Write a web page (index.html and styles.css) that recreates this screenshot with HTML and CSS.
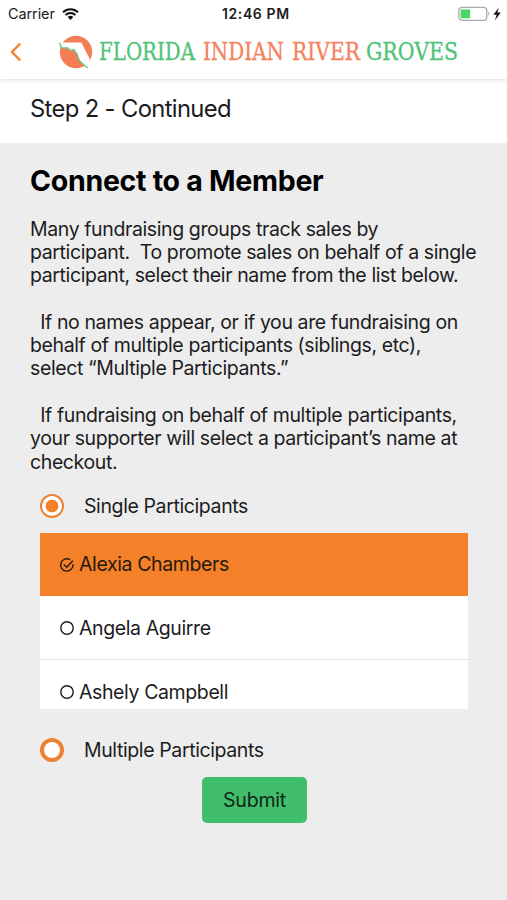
FILE: index.html
```html
<!DOCTYPE html>
<html lang="en">
<head>
<meta charset="utf-8">
<title>Connect to a Member</title>
<link rel="stylesheet" href="styles.css">
</head>
<body>
<header class="top">
  <div class="status">
    <span class="carrier">Carrier</span>
    <svg class="wifi" viewBox="0 0 17 12"><path d="M1 4.3a10.7 10.7 0 0 1 15 0M3.6 7a7 7 0 0 1 9.8 0" fill="none" stroke="#111" stroke-width="2.1"/><path d="M5.7 9.1a4 4 0 0 1 5.6 0L8.5 12z" fill="#111"/></svg>
    <span class="time">12:46 PM</span>
    <svg class="battery" viewBox="0 0 46 16"><rect x=".8" y="1.3" width="28" height="13" rx="3.3" fill="#fff" stroke="#aaa" stroke-width="1.3"/><rect x="2.6" y="3.4" width="9.6" height="8.8" rx=".8" fill="#4bd763"/><path d="M30.3 5.5q2.4 2.100 0 4.600z" fill="#aaa"/><path d="M40.8 1.600l-5.400 7.100h3.300l-1.900 5.700 6-7.800h-3.500z" fill="#111"/></svg>
  </div>
  <div class="nav">
    <svg class="back" viewBox="0 0 12 20"><path d="M10.2 1.5L2 10l8.2 8.5" fill="none" stroke="#f48029" stroke-width="2.4"/></svg>
    <div class="brand">
      <svg class="logo" viewBox="0 0 34 38">
        <circle cx="17" cy="19" r="16.2" fill="#f37e55"/>
        <path d="M.5 9.500L22.500 9.500 26.300 17.500 30.800 26 29.500 34.700 27.500 34.300 20.500 28 17.500 20.500 14.500 17 11.500 17.800 8.500 15.300 2.600 15z" fill="#fff"/>
        <path d="M.4 9.800l2.300 5 6 .1 3 2.500 3-.8 3.200 4 2.600 7.200 7.300 6.600 1.400.3" fill="none" stroke="#6cc58a" stroke-width="1.300"/>
      </svg>
      <svg class="words" viewBox="0 0 362 26">
        <text x="0" y="21" textLength="96" lengthAdjust="spacingAndGlyphs" class="green">FLORIDA</text>
        <text x="104" y="21" textLength="81" lengthAdjust="spacingAndGlyphs" class="coral">INDIAN</text>
        <text x="193" y="21" textLength="68" lengthAdjust="spacingAndGlyphs" class="coral">RIVER</text>
        <text x="267" y="21" textLength="92" lengthAdjust="spacingAndGlyphs" class="green">GROVES</text>
      </svg>
    </div>
  </div>
</header>
<div class="step">Step 2 - Continued</div>
<main>
  <h1>Connect to a Member</h1>
  <p class="copy">Many fundraising groups track sales by
participant.  To promote sales on behalf of a single
participant, select their name from the list below.

  If no names appear, or if you are fundraising on
behalf of multiple participants (siblings, etc),
select “Multiple Participants.”

  If fundraising on behalf of multiple participants,
your supporter will select a participant’s name at
checkout.</p>
  <div class="choice single"><span class="radio on"></span><span class="label">Single Participants</span></div>
  <div class="list">
    <div class="row selected"><svg class="mark" viewBox="0 0 16 16"><path d="M14 7.300A6.200 6.200 0 1 1 11 2.600M4.800 7.500l3 2.800 6-6.600" fill="none" stroke="currentColor" stroke-width="1.4"/></svg><span class="label">Alexia Chambers</span></div>
    <div class="row"><svg class="mark" viewBox="0 0 16 16"><circle cx="8" cy="8" r="6.200" fill="none" stroke="currentColor" stroke-width="1.4"/></svg><span class="label">Angela Aguirre</span></div>
    <div class="row"><svg class="mark" viewBox="0 0 16 16"><circle cx="8" cy="8" r="6.200" fill="none" stroke="currentColor" stroke-width="1.4"/></svg><span class="label">Ashely Campbell</span></div>
  </div>
  <div class="choice multiple"><span class="radio"></span><span class="label">Multiple Participants</span></div>
  <button class="submit">Submit</button>
</main>
</body>
</html>
```

FILE: styles.css
```css
* { box-sizing: border-box; }
body {
  margin: 0;
  height: 900px;
  overflow: hidden;
  background: #ededed;
  color: #1c1c1e;
  font: 19.5px/23.3px Inter, "Liberation Sans", sans-serif;
  letter-spacing: -0.39px;
}
svg { display: block; flex: none; }
.top {
  position: relative;
  height: 79px;
  background: #fff;
  box-shadow: 0 1px 4px rgba(0, 0, 0, .14);
}
.status {
  display: grid;
  grid-template-columns: 54px 168px 1fr 46px;
  align-items: center;
  height: 28px;
  padding: 0 3px 0 8px;
  font-size: 14.5px;
}
.carrier { letter-spacing: -0.1px; }
.wifi { width: 17px; height: 12px; }
.time {
  margin-left: -8px;
  font-size: 14px;
  font-weight: 600;
  letter-spacing: .6px;
}
.battery { width: 46px; height: 16px; }
.nav { display: flex; align-items: center; height: 48px; }
.back { width: 12px; height: 20px; margin-left: 10px; }
.brand { display: flex; align-items: center; gap: 6px; margin-left: 37px; }
.logo { width: 34px; height: 38px; }
.words {
  width: 362px;
  height: 26px;
  overflow: visible;
  font: 23.300px "DejaVu Serif", serif;
  letter-spacing: 0;
  stroke-width: .3px;
}
.green { fill: #4fc477; stroke: #4fc477; }
.coral { fill: #f4825c; stroke: #f4825c; }
.step {
  height: 64px;
  padding: 18px 30px 0;
  background: #fff;
  font-size: 23.800px;
  line-height: 24px;
  letter-spacing: -0.65px;
}
main { display: flex; flex-direction: column; padding: 0 40px; }
h1 {
  margin: 21px -10px 0;
  color: #000;
  font-size: 28.500px;
  line-height: 34px;
  font-weight: 700;
  letter-spacing: -0.28px;
}
.copy { margin: 19.600px -20px 0 -10px; white-space: pre; }
.choice { display: flex; align-items: center; gap: 20px; height: 26px; }
.single { margin-top: 19px; }
.label { padding-top: 2px; }
.radio {
  width: 24px;
  height: 24px;
  border: 4px solid #ee8033;
  border-radius: 50%;
  background: #fff;
}
.radio.on {
  border-width: 2.500px;
  background: radial-gradient(circle, #f48029 0 6px, #fff 6.700px);
}
.list { width: 428px; height: 176px; margin-top: 14px; overflow: hidden; background: #fff; }
.row {
  display: flex;
  align-items: center;
  gap: 4px;
  height: 64px;
  padding-left: 19px;
  border-bottom: 1px solid #e5e5e5;
}
.selected { height: 63px; background: #f48029; color: #26190f; border-color: #f48029; }
.row:not(.selected) .label { padding-top: 3px; }
.mark { width: 16px; height: 16px; margin-top: 2px; }
.multiple { margin-top: 28px; }
.submit {
  width: 105px;
  height: 46px;
  margin: 14px 0 0 162px;
  padding: 2px 0 0;
  border: 0;
  border-radius: 5px;
  background: #41be6b;
  color: #10251a;
  font: inherit;
  letter-spacing: -0.2px;
}
```
